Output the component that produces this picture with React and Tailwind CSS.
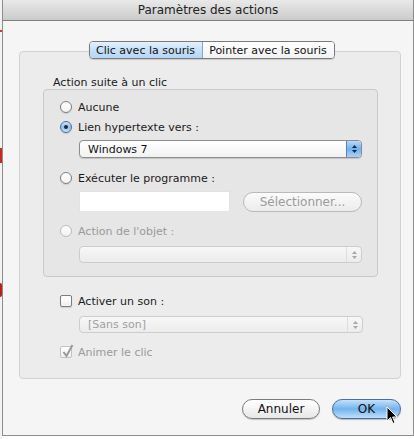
import React from "react";

function Radio({ checked, disabled, label }) {
  return (
    <div className="flex items-center h-[20px]">
      {checked ? (
        <span className="w-[12px] h-[12px] rounded-full border border-[#4d6f9e] bg-gradient-to-b from-[#cfe5fa] via-[#8fc0ee] to-[#c7e2fb] flex items-center justify-center shadow-[0_1px_1px_rgba(0,0,0,0.15)]">
          <span className="w-[4px] h-[4px] rounded-full bg-[#1d2a3a]" />
        </span>
      ) : (
        <span
          className={
            "w-[12px] h-[12px] rounded-full border bg-gradient-to-b from-white to-[#f1f1f1] " +
            (disabled ? "border-[#bdbdbd]" : "border-[#7d7d7d] shadow-[0_1px_1px_rgba(0,0,0,0.12)]")
          }
        />
      )}
      <span className={"ml-[6px] " + (disabled ? "text-[#9a9a9a]" : "text-[#1a1a1a]")}>{label}</span>
    </div>
  );
}

function Stepper({ blue, disabled }) {
  const c = blue ? "#14283f" : disabled ? "#a8a8a8" : "#444";
  return (
    <span
      className={
        "w-[15px] h-full flex flex-col items-center justify-center gap-[2px] rounded-r-[4px] " +
        (blue
          ? "bg-gradient-to-b from-[#b8daf7] via-[#6fb0ec] to-[#a9d3f6] border-l border-[#5b82b4]"
          : "border-l border-[#dedede]")
      }
    >
      <svg width="5" height="3" viewBox="0 0 5 3">
        <path d="M0 3 L2.5 0 L5 3 Z" fill={c} />
      </svg>
      <svg width="5" height="3" viewBox="0 0 5 3">
        <path d="M0 0 L2.5 3 L5 0 Z" fill={c} />
      </svg>
    </span>
  );
}

function Popup({ label, blue, disabled, height }) {
  return (
    <div
      className={
        "flex items-stretch rounded-[4px] border bg-gradient-to-b " +
        (disabled
          ? "border-[#cdcdcd] from-[#f7f7f7] to-[#ececec] "
          : "border-[#8c8c8c] from-white to-[#f2f2f2] shadow-[0_1px_1px_rgba(0,0,0,0.15)] ") +
        height
      }
    >
      <span className={"flex-1 flex items-center pl-[8px] " + (disabled ? "text-[#a0a0a0]" : "text-[#111]")}>
        {label}
      </span>
      <Stepper blue={blue} disabled={disabled} />
    </div>
  );
}

export default function App() {
  return (
    <div className="w-[414px] h-[439px] flex bg-white font-['DejaVu_Sans',sans-serif] text-[11px] leading-none overflow-hidden">
      {/* desktop strip behind window */}
      <div className="relative w-[2px] h-full bg-[#f2f2f2]">
        <div className="absolute left-0 top-[30px] w-[2px] h-[2px] bg-[#d23a32]" />
        <div className="absolute left-0 top-[148px] w-[2px] h-[15px] bg-[#c8281f]" />
        <div className="absolute left-0 top-[283px] w-[2px] h-[14px] bg-[#b5221a] rounded-r-full" />
      </div>
      <div className="flex-1 flex flex-col h-[436px] border-l border-b border-r border-[#8d8d8d] bg-[#f5f5f5]">
        {/* title bar */}
        <div className="h-[21px] shrink-0 flex items-center justify-center bg-gradient-to-b from-[#e9e9e9] to-[#cbcbcb] border-b border-[#7f7f7f] text-[12px] text-[#222]">
          Paramètres des actions
        </div>
        {/* body */}
        <div className="flex-1 flex flex-col pl-[16px] pr-[12px]">
          {/* tabs */}
          <div className="relative z-10 mt-[20px] flex justify-center pl-[3px]">
            <div className="flex h-[18px] rounded-[4px] border border-[#7a7a7a] overflow-hidden shadow-[0_1px_1px_rgba(0,0,0,0.15)]">
              <div className="w-[113px] flex items-center justify-center bg-gradient-to-b from-[#e6f1fc] via-[#c6e0f8] to-[#b5d6f5] border-r border-[#8aa3c6] text-[#111]">
                Clic avec la souris
              </div>
              <div className="w-[131px] flex items-center justify-center bg-gradient-to-b from-white to-[#f2f2f2] text-[#111]">
                Pointer avec la souris
              </div>
            </div>
          </div>
          {/* tab box */}
          <div className="-mt-[8px] flex flex-col rounded-[4px] border border-[#d2d2d2] bg-[#ececec] pt-[23px] pl-[23px] pr-[22px] pb-[16px]">
            <div className="pl-[10px] h-[14px] flex items-center text-[#1a1a1a]">Action suite à un clic</div>
            <div className="rounded-[4px] border border-[#c9c9c9] bg-[#e6e6e6] pl-[16px] pr-[15px] pt-[7px] pb-[13px] flex flex-col">
              <Radio label="Aucune" />
              <Radio checked label="Lien hypertexte vers :" />
              <div className="ml-[19px] mt-[3px]">
                <Popup label="Windows 7" blue height="h-[18px]" />
              </div>
              <div className="mt-[10px]">
                <Radio label="Exécuter le programme :" />
              </div>
              <div className="ml-[19px] mt-[3px] flex items-center">
                <div className="w-[151px] h-[21px] bg-white border border-[#e2e2e2]" />
                <div className="ml-[13px] flex-1 h-[20px] rounded-full border border-[#b9b9b9] bg-gradient-to-b from-[#fbfbfb] to-[#ececec] flex items-center justify-center text-[#9b9b9b] text-[12px]">
                  Sélectionner...
                </div>
              </div>
              <div className="mt-[9px]">
                <Radio disabled label="Action de l'objet :" />
              </div>
              <div className="ml-[19px] mt-[5px]">
                <Popup label="" disabled height="h-[17px]" />
              </div>
            </div>
            <div className="mt-[14px] pl-[17px] pr-[15px] flex flex-col">
              <div className="flex items-center h-[20px]">
                <span className="w-[12px] h-[12px] rounded-[2px] border border-[#7d7d7d] bg-gradient-to-b from-white to-[#f0f0f0] shadow-[0_1px_1px_rgba(0,0,0,0.12)]" />
                <span className="ml-[6px] text-[#1a1a1a]">Activer un son :</span>
              </div>
              <div className="ml-[19px] mt-[5px]">
                <Popup label="[Sans son]" disabled height="h-[17px]" />
              </div>
              <div className="mt-[9px] flex items-center h-[20px]">
                <span className="relative w-[12px] h-[12px] rounded-[2px] border border-[#c2c2c2] bg-gradient-to-b from-white to-[#f0f0f0]">
                  <svg className="absolute -top-[3px] left-[1px]" width="12" height="14" viewBox="0 0 12 14">
                    <path d="M1.5 8 L4.5 12 L10.5 1" fill="none" stroke="#9a9a9a" strokeWidth="2" />
                  </svg>
                </span>
                <span className="ml-[6px] text-[#9a9a9a]">Animer le clic</span>
              </div>
            </div>
          </div>
          {/* buttons */}
          <div className="mt-[20px] flex justify-end gap-[12px] relative">
            <div className="w-[78px] h-[20px] rounded-full border border-[#7c7c7c] bg-gradient-to-b from-white via-[#f4f4f4] to-[#e6e6e6] flex items-center justify-center text-[12px] text-[#111] shadow-[0_1px_1px_rgba(0,0,0,0.2)]">
              Annuler
            </div>
            <div className="w-[69px] h-[20px] rounded-full border border-[#4a6e9c] bg-gradient-to-b from-[#c4e1fa] via-[#72b3ee] to-[#bfe0fb] flex items-center justify-center text-[12px] text-[#111] shadow-[0_1px_1px_rgba(0,0,0,0.25)]">
              OK
            </div>
            <svg className="absolute right-[3px] top-[7px]" width="12" height="19" viewBox="0 0 12 19">
              <path d="M1 1 L1 15 L4.5 11.5 L7 17.5 L9 16.6 L6.6 11 L11 11 Z" fill="#000" stroke="#fff" strokeWidth="1" strokeLinejoin="round" />
            </svg>
          </div>
        </div>
      </div>
    </div>
  );
}
